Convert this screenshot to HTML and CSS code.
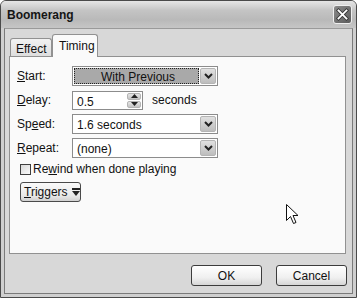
FILE: index.html
```html
<!DOCTYPE html>
<html>
<head>
  <title>Boomerang</title>
  <meta name="viewport" content="width=device-width, initial-scale=1.0">
  <link rel="stylesheet" href="styles.css">
</head>
<body>

<div class="dialog">
  <div class="titlebar">
    <span class="title">Boomerang</span>
    <div class="close">
      <svg width="19" height="19" viewBox="0 0 19 19">
        <path d="M5 5 L14 14 M14 5 L5 14" stroke="#3a3a3a" stroke-width="4" stroke-linecap="square"/>
        <path d="M5 5 L14 14 M14 5 L5 14" stroke="#fff" stroke-width="2" stroke-linecap="square"/>
      </svg>
    </div>
  </div>

  <div class="frame">
    <div class="content">
      <div class="tabs">
        <div class="tab">Effect</div>
        <div class="tab active">Timing</div>
      </div>

      <div class="panel">
        <div class="row">
          <label><u>S</u>tart:</label>
          <div class="select">
            <div class="value focus">With Previous</div>
            <div class="drop"><svg width="9" height="6" viewBox="0 0 9 6"><path d="M1 1 L4.5 4.5 L8 1" fill="none" stroke="#222" stroke-width="2"/></svg></div>
          </div>
        </div>

        <div class="row">
          <label><u>D</u>elay:</label>
          <div class="spin">
            <div class="value">0.5</div>
            <div class="spin-btns">
              <div class="spin-btn"><svg width="7" height="4" viewBox="0 0 7 4"><path d="M0 4 L3.5 0 L7 4 Z" fill="#222"/></svg></div>
              <div class="spin-btn"><svg width="7" height="4" viewBox="0 0 7 4"><path d="M0 0 L3.5 4 L7 0 Z" fill="#222"/></svg></div>
            </div>
          </div>
          <span class="unit">seconds</span>
        </div>

        <div class="row">
          <label>Sp<u>e</u>ed:</label>
          <div class="select">
            <div class="value">1.6 seconds</div>
            <div class="drop"><svg width="9" height="6" viewBox="0 0 9 6"><path d="M1 1 L4.5 4.5 L8 1" fill="none" stroke="#222" stroke-width="2"/></svg></div>
          </div>
        </div>

        <div class="row">
          <label><u>R</u>epeat:</label>
          <div class="select">
            <div class="value">(none)</div>
            <div class="drop"><svg width="9" height="6" viewBox="0 0 9 6"><path d="M1 1 L4.5 4.5 L8 1" fill="none" stroke="#222" stroke-width="2"/></svg></div>
          </div>
        </div>

        <div class="check-row">
          <span class="checkbox"></span>
          <span>Re<u>w</u>ind when done playing</span>
        </div>

        <div class="triggers">
          <span><u>T</u>riggers</span>
          <svg class="more" width="8" height="8" viewBox="0 0 8 8"><rect x="0" y="0" width="8" height="2" fill="#222"/><path d="M0 3 L8 3 L4 8 Z" fill="#222"/></svg>
        </div>
      </div>

      <div class="footer">
        <div class="btn">OK</div>
        <div class="btn">Cancel</div>
      </div>
    </div>
  </div>

  <svg class="cursor" width="13" height="21" viewBox="0 0 13 21">
    <path d="M0.5 0.5 L0.5 16.5 L4.5 12.5 L7.5 19.5 L10 18.5 L7 11.5 L12 11.5 Z" fill="#fff" stroke="#111" stroke-width="1"/>
  </svg>
</div>

</body>
</html>
```

FILE: styles.css
```css
* {
  margin: 0;
  padding: 0;
  box-sizing: border-box;
}

body {
  background: #fff;
  font-family: "Liberation Sans", Arial, sans-serif;
  font-size: 11px;
  color: #111;
}

.dialog {
  position: relative;
  width: 357px;
  height: 298px;
  border: 1px solid #4a4a4a;
  border-radius: 6px 6px 0 0;
  display: flex;
  flex-direction: column;
  overflow: hidden;
  background: #cfcfcf;
}

.titlebar {
  height: 27px;
  display: flex;
  align-items: center;
  justify-content: space-between;
  padding: 0 4px 0 6px;
  background: linear-gradient(#e6e6e6, #c4c4c4 35%, #b9b9b9 70%, #c6c6c6);
}

.title {
  font-size: 12px;
  font-weight: bold;
  color: #151515;
}

.close {
  width: 19px;
  height: 19px;
  border: 1px solid #efefef;
  border-radius: 3px;
  background: linear-gradient(135deg, #8a8a8a, #5c5c5c);
  display: flex;
  align-items: center;
  justify-content: center;
}

.close svg {
  width: 17px;
  height: 17px;
}

.frame {
  flex: 1;
  padding: 0 3px 3px;
  display: flex;
}

.content {
  flex: 1;
  border: 1px solid #7a7a7a;
  border-top-color: #9a9a9a;
  background: #d8d8d8;
  padding: 5px 2px 0 4px;
  display: flex;
  flex-direction: column;
}

.tabs {
  display: flex;
  align-items: flex-end;
  height: 22px;
  padding-left: 1px;
  position: relative;
  z-index: 1;
}

.tab {
  width: 42px;
  height: 18px;
  border: 1px solid #919191;
  border-bottom: none;
  border-radius: 3px 3px 0 0;
  background: linear-gradient(#f2f2f2, #dedede);
  padding: 3px 0 0 5px;
  font-size: 12px;
}

.tab.active {
  width: 46px;
  height: 23px;
  margin-bottom: -1px;
  background: #fafafa;
  padding: 4px 0 0 6px;
}

.panel {
  width: 337px;
  height: 198px;
  border: 1px solid #919191;
  background: #fafafa;
  padding: 9px 0 0 7px;
}

.row {
  display: flex;
  align-items: center;
  height: 20px;
  margin-bottom: 4px;
}

.row label {
  width: 55px;
  font-size: 12px;
}

.select {
  width: 146px;
  height: 20px;
  border: 1px solid #8c8c8c;
  background: #fff;
  display: flex;
  padding: 1px;
}

.value {
  flex: 1;
  padding: 2px 0 0 3px;
  font-size: 12px;
}

.value.focus {
  background: #a9a9a9;
  border: 1px dotted #222;
  text-align: center;
  padding-top: 1px;
  margin-right: 1px;
}

.drop {
  width: 16px;
  border: 1px solid #b4b4b4;
  border-radius: 2px;
  background: linear-gradient(#e0e0e0, #bdbdbd);
  display: flex;
  align-items: center;
  justify-content: center;
}

.spin {
  width: 71px;
  height: 19px;
  border: 1px solid #8c8c8c;
  background: #fff;
  display: flex;
  padding: 1px;
}

.spin-btns {
  width: 14px;
  display: flex;
  flex-direction: column;
  gap: 1px;
}

.spin-btn {
  flex: 1;
  border: 1px solid #b4b4b4;
  border-radius: 2px;
  background: linear-gradient(#e6e6e6, #c4c4c4);
  display: flex;
  align-items: center;
  justify-content: center;
}

.unit {
  margin-left: 9px;
  font-size: 12px;
}

.check-row {
  display: flex;
  align-items: center;
  gap: 2px;
  height: 14px;
  margin: 0 0 6px 3px;
  font-size: 12px;
}

.checkbox {
  width: 11px;
  height: 11px;
  border: 1px solid #3e3e3e;
  background: linear-gradient(135deg, #d8d8d8, #fafafa);
}

.triggers {
  width: 61px;
  height: 20px;
  margin-left: 3px;
  border: 1px solid #4a4a4a;
  border-radius: 3px;
  background: linear-gradient(#fafafa, #e8e8e8 70%, #d0d0d0);
  display: flex;
  align-items: center;
  gap: 4px;
  padding-left: 3px;
  font-size: 12px;
}

.more {
  flex-shrink: 0;
}

.footer {
  display: flex;
  justify-content: flex-end;
  gap: 14px;
  padding: 11px 3px 0 0;
}

.btn {
  width: 71px;
  height: 21px;
  border: 1px solid #3c3c3c;
  border-radius: 3px;
  background: linear-gradient(#ffffff, #f0f0f0 60%, #d6d6d6);
  display: flex;
  align-items: center;
  justify-content: center;
  font-size: 12px;
}

.cursor {
  position: absolute;
  left: 285px;
  top: 203px;
}
```
